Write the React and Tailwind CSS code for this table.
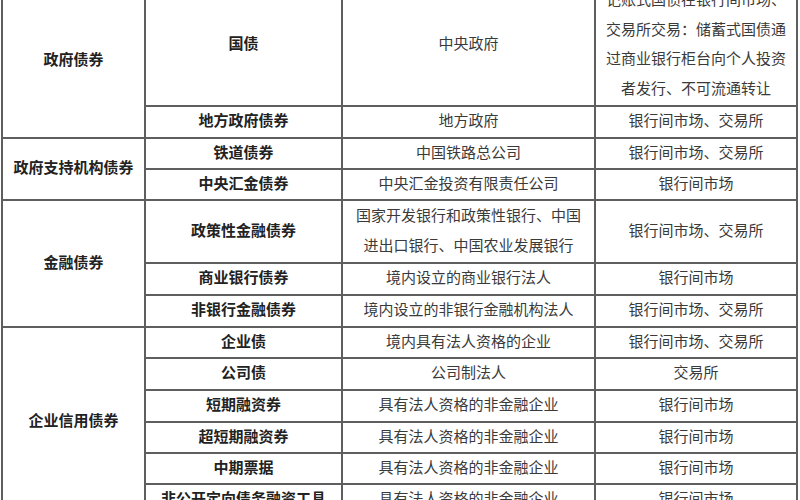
import React from "react";

const font = { fontFamily: '"Liberation Serif", "Noto Sans CJK SC", serif' };

function Cell({ children, className = "", bold = false }) {
  return (
    <div
      className={`bg-white flex flex-col items-center justify-center text-center text-[15px] leading-[29.5px] ${
        bold ? "font-bold text-[#222]" : "text-[#3a3a3a]"
      } ${className}`}
    >
      {children}
    </div>
  );
}

const rows = [
  ["地方政府债券", "地方政府", "银行间市场、交易所"],
  ["铁道债券", "中国铁路总公司", "银行间市场、交易所"],
  ["中央汇金债券", "中央汇金投资有限责任公司", "银行间市场"],
  ["政策性金融债券", ["国家开发银行和政策性银行、中国", "进出口银行、中国农业发展银行"], "银行间市场、交易所"],
  ["商业银行债券", "境内设立的商业银行法人", "银行间市场"],
  ["非银行金融债券", "境内设立的非银行金融机构法人", "银行间市场、交易所"],
  ["企业债", "境内具有法人资格的企业", "银行间市场、交易所"],
  ["公司债", "公司制法人", "交易所"],
  ["短期融资券", "具有法人资格的非金融企业", "银行间市场"],
  ["超短期融资券", "具有法人资格的非金融企业", "银行间市场"],
  ["中期票据", "具有法人资格的非金融企业", "银行间市场"],
  ["非公开定向债务融资工具", "具有法人资格的非金融企业", "银行间市场"],
];

const rowClass = [
  "row-start-2",
  "row-start-3",
  "row-start-4",
  "row-start-5",
  "row-start-6",
  "row-start-7",
  "row-start-8",
  "row-start-9",
  "row-start-10",
  "row-start-11",
  "row-start-12",
  "row-start-13",
];

function Lines({ v }) {
  if (Array.isArray(v)) {
    return v.map((l, i) => (
      <span key={i} className="whitespace-nowrap block">
        {l}
      </span>
    ));
  }
  return <span className="whitespace-nowrap">{v}</span>;
}

export default function App() {
  return (
    <div className="w-[800px] h-[500px] overflow-hidden bg-white" style={font}>
      <div className="ml-[1px] mt-[-17px] w-[797px] grid grid-cols-[141px_195px_251px_200px] grid-rows-[120px_30px_29px_29px_61px_30px_30px_29px_30px_30px_29px_29px_30px] gap-[2px] p-[2px] bg-[#5e5e5e]">
        <Cell bold className="col-start-1 row-start-1 row-span-2">政府债券</Cell>
        <Cell bold className="col-start-1 row-start-3 row-span-2">政府支持机构债券</Cell>
        <Cell bold className="col-start-1 row-start-5 row-span-3">金融债券</Cell>
        <Cell bold className="col-start-1 row-start-8 row-span-6">企业信用债券</Cell>

        <Cell bold className="col-start-2 row-start-1">国债</Cell>
        <Cell className="col-start-3 row-start-1">中央政府</Cell>
        <Cell className="col-start-4 row-start-1">
          <Lines
            v={[
              "记账式国债在银行间市场、",
              "交易所交易：储蓄式国债通",
              "过商业银行柜台向个人投资",
              "者发行、不可流通转让",
            ]}
          />
        </Cell>

        {rows.map((r, i) => {
          const rc = rowClass[i];
          return (
            <React.Fragment key={i}>
              <Cell bold className={`col-start-2 ${rc}`}>
                <Lines v={r[0]} />
              </Cell>
              <Cell className={`col-start-3 ${rc}`}>
                <Lines v={r[1]} />
              </Cell>
              <Cell className={`col-start-4 ${rc}`}>
                <Lines v={r[2]} />
              </Cell>
            </React.Fragment>
          );
        })}
      </div>
    </div>
  );
}
